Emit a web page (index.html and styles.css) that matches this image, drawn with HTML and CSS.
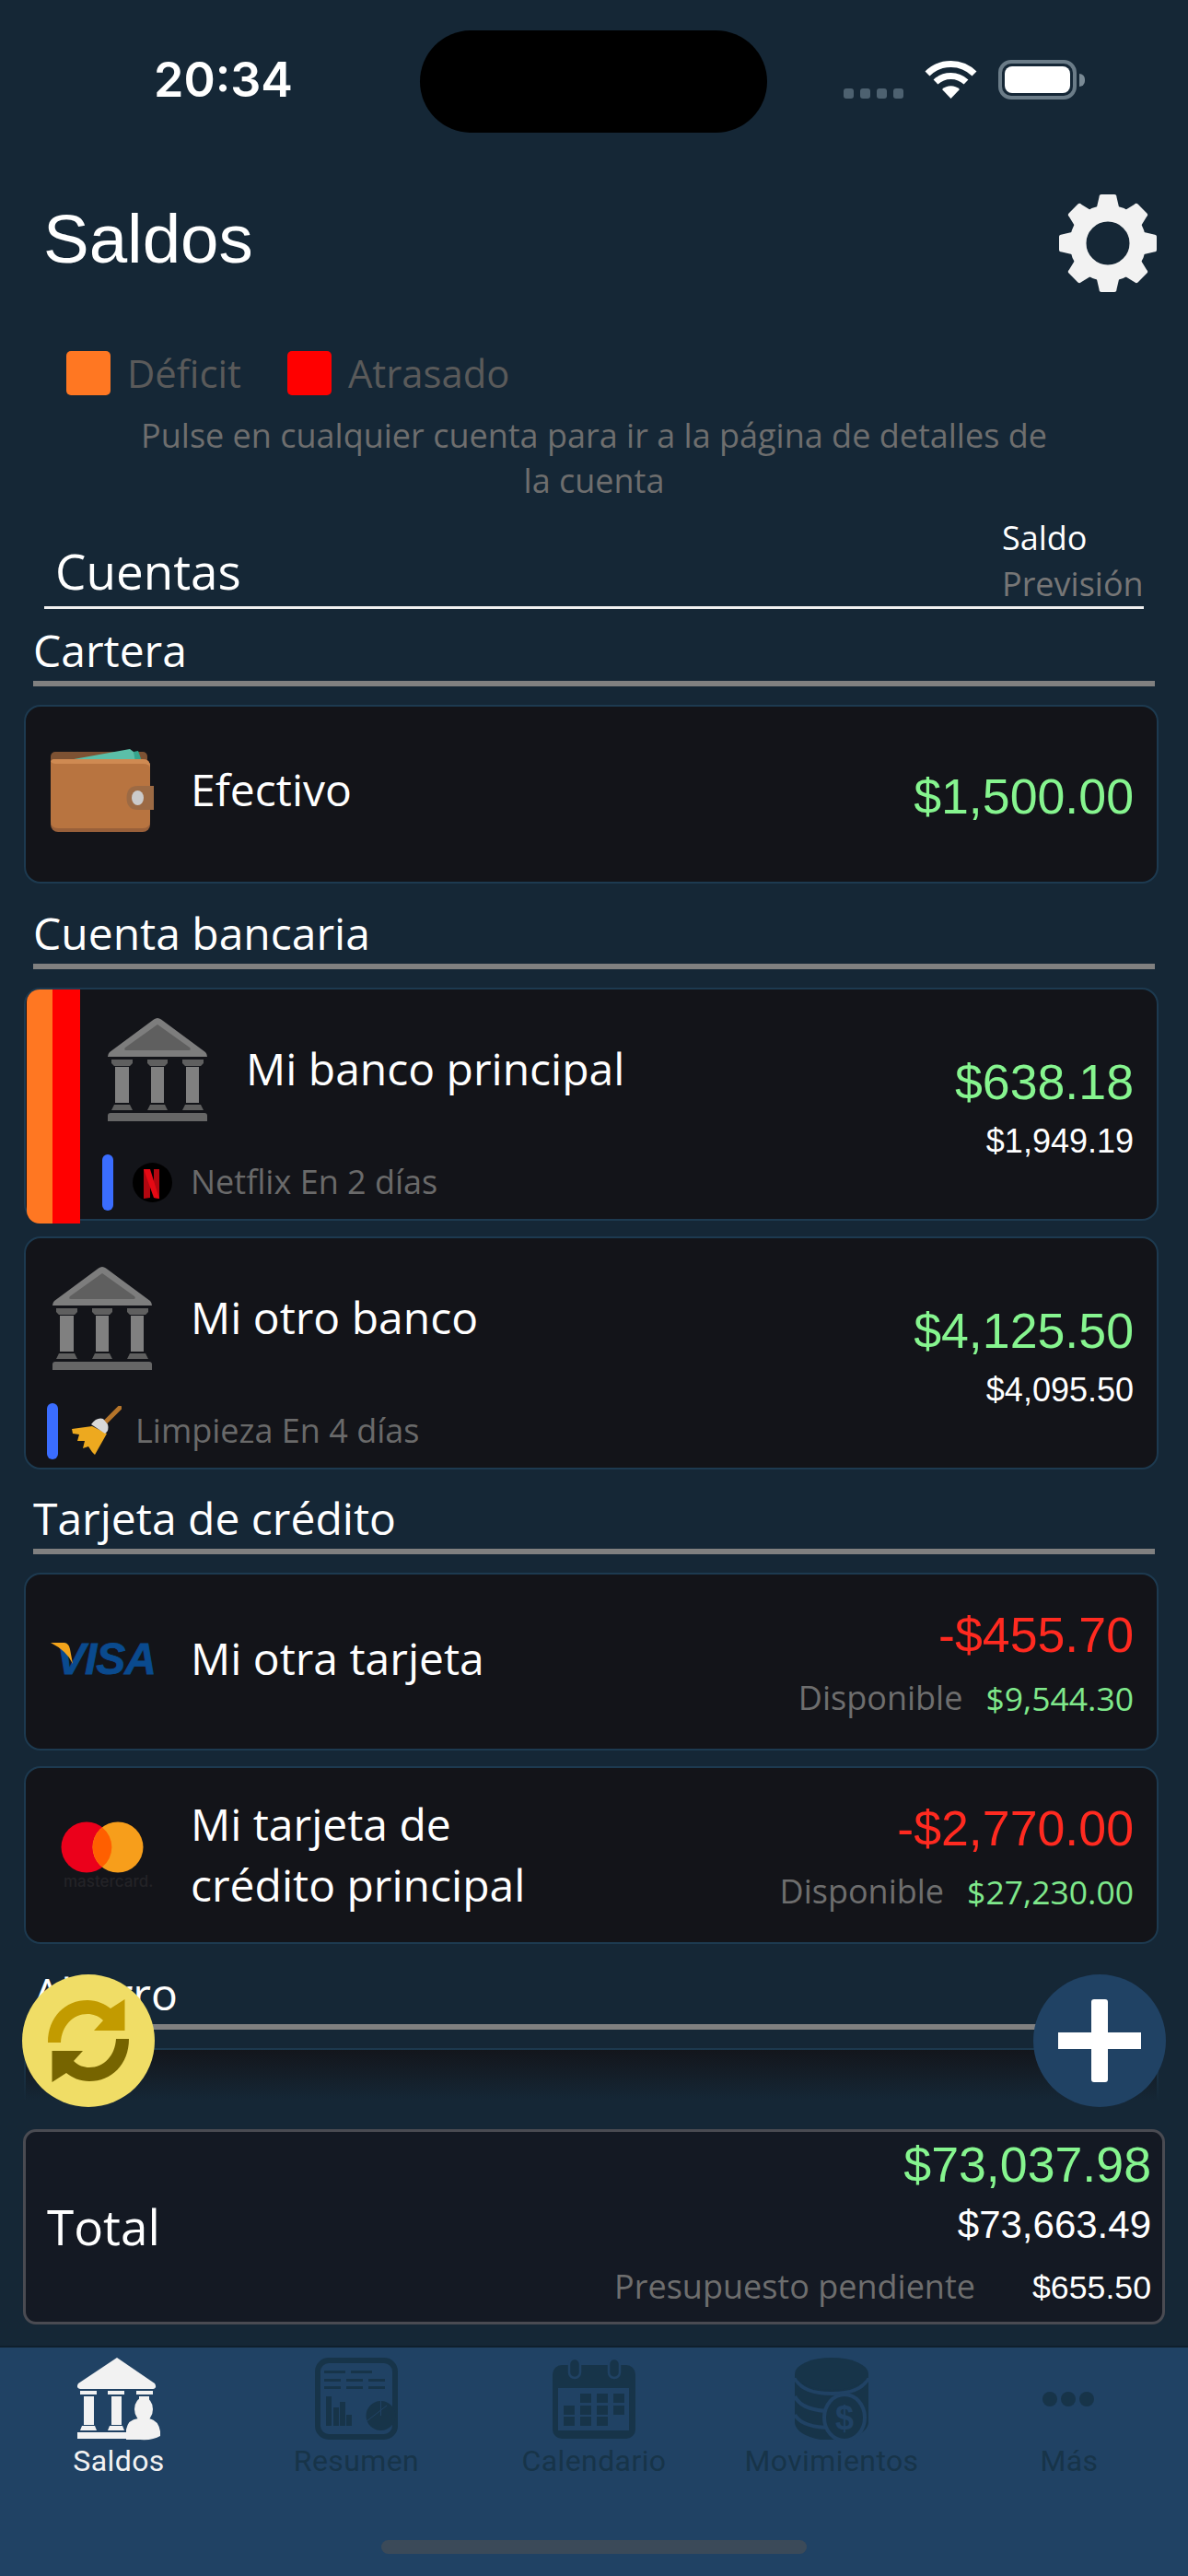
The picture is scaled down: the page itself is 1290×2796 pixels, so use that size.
FILE: index.html
```html
<!DOCTYPE html>
<html lang="es">
<head>
<meta charset="utf-8">
<title>Saldos</title>
<link rel="stylesheet" href="styles.css">
</head>
<body>
<div class="screen">
  <div class="status">
    <div class="time">20:34</div>
    <div class="island"></div>
    <div class="sys">
      <div class="signal"><i></i><i></i><i></i><i></i></div>
      <svg class="wifi" width="57" height="42" viewBox="0 0 57 42"><path d="M3 15A36 36 0 0 1 54 15" fill="none" stroke="#fff" stroke-width="7"/><path d="M12 24A24 24 0 0 1 45 24" fill="none" stroke="#fff" stroke-width="7"/><path d="M28.5 42L19 32A14 14 0 0 1 38 32Z" fill="#fff"/></svg>
      <div class="battery"><div class="battery-fill"></div></div>
      <div class="battery-nub"></div>
    </div>
  </div>

  <header class="head">
    <h1 class="title">Saldos</h1>
    <svg class="gear" width="106" height="106" viewBox="0 0 106 106">
      <defs><path id="tooth" d="M43.5 3Q43.5 0 46 0H60Q62.5 0 62.5 3L66 18H40Z" fill="#f2f2f2"/></defs>
      <use href="#tooth"/><use href="#tooth" transform="rotate(45 53 53)"/><use href="#tooth" transform="rotate(90 53 53)"/><use href="#tooth" transform="rotate(135 53 53)"/><use href="#tooth" transform="rotate(180 53 53)"/><use href="#tooth" transform="rotate(225 53 53)"/><use href="#tooth" transform="rotate(270 53 53)"/><use href="#tooth" transform="rotate(315 53 53)"/>
      <circle cx="53" cy="53" r="32.5" fill="none" stroke="#f2f2f2" stroke-width="18"/>
    </svg>
  </header>

  <div class="legend">
    <span class="swatch swatch-orange"></span><span class="legend-text">Déficit</span>
    <span class="swatch swatch-red"></span><span class="legend-text">Atrasado</span>
  </div>
  <p class="hint">Pulse en cualquier cuenta para ir a la página de detalles de la cuenta</p>

  <div class="cols">
    <div class="cols-title">Cuentas</div>
    <div class="cols-right"><div class="cols-saldo">Saldo</div><div class="cols-prev">Previsión</div></div>
  </div>

  <main class="list">
    <section class="group group-first">
      <div class="group-head">Cartera</div>
      <article class="card">
        <div class="body body-center">
          <svg class="icon wallet" width="112" height="90" viewBox="0 0 112 90">
            <rect x="0" y="3" width="105" height="24" rx="5" fill="#7d5233"/>
            <path d="M14 13L86 0 L90 3 L100 25H14Z" fill="#5bbfa8"/><path d="M90 3L95 2L100 16V25H94Z" fill="#36a58d"/>
            <rect x="0" y="11" width="108" height="79" rx="8" fill="#99603a"/>
            <path d="M0 15Q0 11 4 11H100Q108 11 108 19V78Q108 86 100 86H8Q0 86 0 78Z" fill="#b87440"/>
            <path d="M0 15Q0 11 4 11H100Q108 11 108 19V21Q108 16 100 16H6Q0 16 0 12Z" fill="#cf8a52"/>
            <path d="M112 40V66H95Q82.500 66 82.500 53Q82.500 40 95 40Z" fill="#9c6a44"/>
            <ellipse cx="94.500" cy="53" rx="6.500" ry="8" fill="#cbcbcb"/>
          </svg>
          <div class="name name-cash">Efectivo</div>
          <div class="amounts"><div class="big green big-low">$1,500.00</div></div>
        </div>
      </article>
    </section>

    <section class="group">
      <div class="group-head">Cuenta bancaria</div>
      <article class="card card-tall">
        <div class="stripes"><span class="stripe-orange"></span><span class="stripe-red"></span></div>
        <div class="body">
          <div class="left">
            <div class="row">
              <svg class="icon" width="112" height="112" viewBox="-2 0 112 112"><use href="#bank"/></svg>
              <div class="name name-tiny">Mi banco principal</div>
            </div>
            <div class="bill">
              <span class="pill"></span>
              <span class="bill-icon">
                <svg width="43" height="43" viewBox="0 0 43 43"><circle cx="21.500" cy="21.500" r="21.500" fill="#000"/><path d="M12 7H19V38L12 39Z" fill="#b20710"/><path d="M23 7H29V39L23 38Z" fill="#b20710"/><path d="M12 7H19L29 39L23 38Z" fill="#e50914"/></svg>
              </span>
              <span class="bill-text">Netflix En 2 días</span>
            </div>
          </div>
          <div class="amounts amounts-top"><div class="big green">$638.18</div><div class="small-sans">$1,949.19</div></div>
        </div>
      </article>
      <article class="card card-tall card-next">
        <div class="body">
          <div class="left">
            <div class="row">
              <svg class="icon" width="112" height="112" viewBox="-2 0 112 112">
                <g id="bank">
                  <path d="M54 0Q56 0 58 1.500L106 37Q108 39 108 42H0Q0 39 2 37L50 1.500Q52 0 54 0Z" fill="#7d7d7d"/>
                  <path d="M54 7L89 32Q91 35 88 35H20Q17 35 19 32Z" fill="#5f5f5f"/>
                  <path d="M4 45H27V49L24 52H7L4 49ZM43 45H65V49L62 52H46L43 49ZM81 45H104V49L101 52H84L81 49Z" fill="#5f5f5f"/>
                  <path d="M8 53H23V92H8ZM47 53H61V92H47ZM85 53H99V92H85Z" fill="#808080"/>
                  <path d="M7 94H24L27 100H4ZM46 94H62L65 100H43ZM84 94H101L104 100H81Z" fill="#5f5f5f"/>
                  <path d="M3 103H105Q108 103 108 106V112H0V106Q0 103 3 103Z" fill="#666"/>
                </g>
              </svg>
              <div class="name name-tiny">Mi otro banco</div>
            </div>
            <div class="bill">
              <span class="pill"></span>
              <span class="bill-icon">
                <svg width="54" height="54" viewBox="0 0 54 54">
                  <path d="M36 18L52 2" stroke="#b5752a" stroke-width="5" stroke-linecap="round"/>
                  <path d="M0 25L22 22L38 30L25 53L22 50L18 44L12 46L14 38L6 38L8 31L1 30Z" fill="#eda91f"/>
                  <path d="M21 20Q27 12 34 14L39 20Q41 27 36 30Z" fill="#d9d9d9"/>
                </svg>
              </span>
              <span class="bill-text">Limpieza En 4 días</span>
            </div>
          </div>
          <div class="amounts amounts-top"><div class="big green">$4,125.50</div><div class="small-sans">$4,095.50</div></div>
        </div>
      </article>
    </section>

    <section class="group">
      <div class="group-head">Tarjeta de crédito</div>
      <article class="card card-low">
        <div class="body body-center">
          <svg class="icon visa" width="112" height="44" viewBox="0 0 112 44">
            <text class="visa-text" x="6" y="39">VISA</text>
            <path d="M0 5H15Q20 6 21 12L24 28Q18 14 0 5Z" fill="#f3a41b"/>
          </svg>
          <div class="name name-up">Mi otra tarjeta</div>
          <div class="amounts amounts-credit">
            <div class="big red">-$455.70</div>
            <div class="avail"><span class="avail-label">Disponible</span><span class="avail-value">$9,544.30</span></div>
          </div>
        </div>
      </article>
      <article class="card card-low card-next">
        <div class="body body-center">
          <svg class="icon" width="112" height="74" viewBox="0 0 112 74">
            <circle cx="39" cy="28" r="27.500" fill="#eb001b"/>
            <circle cx="73" cy="28" r="27.500" fill="#f79e1b"/>
            <path d="M56 6.500A27.500 27.500 0 0 1 56 49.500A27.500 27.500 0 0 1 56 6.500Z" fill="#ff5f00"/>
            <text class="mc-text" x="14" y="71">mastercard.</text>
          </svg>
          <div class="name name-two">Mi tarjeta de<br>crédito principal</div>
          <div class="amounts amounts-credit">
            <div class="big red">-$2,770.00</div>
            <div class="avail"><span class="avail-label">Disponible</span><span class="avail-value">$27,230.00</span></div>
          </div>
        </div>
      </article>
    </section>

    <section class="group">
      <div class="group-head">Ahorro</div>
      <article class="card card-low"></article>
    </section>
    <div class="fade"></div>
  </main>

  <section class="total">
    <div class="total-label">Total</div>
    <div class="total-right">
      <div class="big green">$73,037.98</div>
      <div class="mid-sans">$73,663.49</div>
      <div class="pending"><span class="pending-label">Presupuesto pendiente</span><span class="pending-value">$655.50</span></div>
    </div>
  </section>

  <nav class="tabbar">
    <div class="tabs">
      <div class="tab tab-active">
        <svg width="90" height="90" viewBox="0 0 90 90" fill="#f2f2f2">
          <path d="M43 0L84 28Q87 33 82 34H3Q-2 33 1 28Z"/>
          <path d="M3 36H21V40H3ZM33 36H51V40H33ZM64 36H82V40H64Z"/>
          <path d="M7 42H18V73H7ZM37 42H48V73H37ZM67 42H78V60H67Z"/>
          <path d="M5 74H19L21 79H3ZM35 74H49L51 79H33Z"/>
          <path d="M0 81H60V88H0Z"/>
          <ellipse cx="72" cy="56" rx="10" ry="13"/>
          <path d="M53 89V78Q55 67 66 66H78Q88 68 90 80V85Q82 90 68 89Z"/>
        </svg>
        <span class="tab-label">Saldos</span>
      </div>
      <div class="tab">
        <svg width="90" height="90" viewBox="0 0 90 90" fill="#173449">
          <rect x="3" y="3" width="84" height="83" rx="12" fill="none" stroke="#173449" stroke-width="6"/>
          <path d="M10 14H33V17H10ZM39 14H62V17H39ZM10 23H28V26H10ZM34 23H52V26H34ZM58 23H76V26H58ZM10 31H28V34H10ZM34 31H52V34H34ZM58 31H76V34H58Z"/>
          <path d="M12 42H18V74H12ZM20 54H26V74H20ZM27 48H33V74H27ZM34 62H40V74H34Z"/>
          <circle cx="71.500" cy="63" r="16"/>
          <path d="M51 73L78 52M71.500 47V63" stroke="#204264" stroke-width="1"/>
        </svg>
        <span class="tab-label">Resumen</span>
      </div>
      <div class="tab">
        <svg width="90" height="90" viewBox="0 0 90 90" fill="#173449">
          <rect x="0" y="8" width="90" height="80" rx="10"/>
          <rect x="18" y="1" width="12" height="21" rx="6" stroke="#204264" stroke-width="2.500"/>
          <rect x="61" y="1" width="12" height="21" rx="6" stroke="#204264" stroke-width="2.500"/>
          <rect x="6" y="33" width="77" height="46" fill="#204264"/>
          <path d="M30 39h12v10h-12zM48 39h12v10h-12zM66 39h12v10h-12zM12 52h12v10h-12zM30 52h12v10h-12zM48 52h12v10h-12zM66 52h12v10h-12zM12 64h12v10h-12zM30 64h12v10h-12zM48 64h12v10h-12z"/>
        </svg>
        <span class="tab-label">Calendario</span>
      </div>
      <div class="tab">
        <svg width="80" height="90" viewBox="0 0 80 90" fill="#173449">
          <path d="M0 18V71Q2 84 28 89H52Q78 84 80 71V18Z"/>
          <path d="M0 22Q8 39 40 39Q72 39 80 22M0 42Q8 58 40 58M0 62Q8 76 40 76" fill="none" stroke="#204264" stroke-width="4"/>
          <ellipse cx="40" cy="17.500" rx="40" ry="17.500"/>
          <ellipse cx="54" cy="65" rx="22" ry="25" stroke="#204264" stroke-width="4"/>
          <text class="coin-text" x="54" y="78">$</text>
        </svg>
        <span class="tab-label">Movimientos</span>
      </div>
      <div class="tab">
        <svg width="90" height="90" viewBox="0 0 90 90" fill="#173449">
          <ellipse cx="24" cy="45" rx="8" ry="8"/><ellipse cx="44" cy="45" rx="8" ry="8"/><ellipse cx="64" cy="45" rx="8" ry="8"/>
        </svg>
        <span class="tab-label">Más</span>
      </div>
    </div>
    <div class="home"></div>
  </nav>

  <button class="fab fab-sync" aria-label="Sincronizar">
    <svg width="144" height="144" viewBox="0 0 144 144">
      <path d="M28 74C28 46 47 28 71 28C81 28 90 32 96 37L111.500 27V61H78L88 50C83 45 77 43 71 43C55 43 43 56 42 74Z" fill="#c29b00"/>
      <path d="M28 74C28 46 47 28 71 28C81 28 90 32 96 37L111.500 27V61H78L88 50C83 45 77 43 71 43C55 43 43 56 42 74Z" fill="#766400" transform="rotate(180 72 72)"/>
    </svg>
  </button>
  <button class="fab fab-add" aria-label="Añadir">
    <svg width="90" height="90" viewBox="0 0 90 90"><path d="M36 3Q36 0 39 0H51Q54 0 54 3V36H90V54H54V87Q54 90 51 90H39Q36 90 36 87V54H0V36H36Z" fill="#fff"/></svg>
  </button>
</div>
</body>
</html>
```
FILE: styles.css
```css
* { box-sizing: border-box; }
html, body { margin: 0; padding: 0; }
body { background: #152736; font-family: "Open Sans", sans-serif; color: #fff; }
.screen { position: relative; width: 1290px; height: 2796px; display: flex; flex-direction: column; overflow: hidden; background: #152736; }

/* status bar */
.status { display: grid; grid-template-columns: 456px 377px 1fr; padding-top: 33px; flex: none; }
.time { padding: 31px 0 0 167px; font: 600 52px/46px Inter, sans-serif; }
.island { height: 111px; border-radius: 56px; background: #000; }
.sys { display: flex; align-items: flex-start; padding: 32px 0 0 83px; }
.signal { display: flex; gap: 7px; margin-top: 31px; }
.signal i { width: 11px; height: 11px; border-radius: 3px; background: #4d6170; }
.wifi { margin-left: 23px; }
.battery { margin-left: 23px; width: 85px; height: 43px; border: 4px solid #6b7c88; border-radius: 14px; padding: 3px; }
.battery-fill { height: 100%; background: #fff; border-radius: 8px; }
.battery-nub { width: 6px; height: 14px; margin: 15px 0 0 3px; background: #7a8a95; border-radius: 0 7px 7px 0; }

/* header */
.head { display: flex; justify-content: space-between; align-items: center; margin-top: 67px; padding: 0 34px 0 47px; flex: none; }
.title { margin: -8px 0 0; font: 400 74.5px/84px "Liberation Sans", sans-serif; }
.legend { display: flex; align-items: center; margin: 64px 0 0 72px; flex: none; height: 48px; }
.swatch { width: 48px; height: 48px; border-radius: 5px; margin-right: 18px; }
.swatch-orange { background: #ff7722; }
.swatch-red { background: #ff0000; margin-left: 50px; margin-right: 18px; }
.legend-text { font-size: 41.8px; line-height: 48px; color: #5a5a5a; }
.hint { margin: 19px 0 0; padding: 0 150px; text-align: center; font-size: 36px; line-height: 49px; color: #6e6e6e; flex: none; }

/* columns heading */
.cols { display: flex; justify-content: space-between; align-items: flex-end; margin: 13px 48px 0; padding: 0 2px 0 12px; border-bottom: 3px solid #f0f0f0; flex: none; }
.cols-title { font-size: 53px; line-height: 64px; margin-bottom: 6px; }
.cols-right { font-size: 36px; line-height: 49.5px; width: 152px; }
.cols-prev { color: #767676; }

/* list */
.list { position: relative; flex: 1; min-height: 0; overflow: hidden; padding: 0 32px 0 26px; }
.group { margin-top: 21.5px; }
.group-first { margin-top: 13px; }
.group-head { margin: 0 4px 20px 10px; padding: 2px 0 3px; font-size: 48px; line-height: 60px; border-bottom: 6px solid #808080; height: 71px; }
.card { display: flex; height: 194px; background: #131419; border: 2px solid #1d3a50; border-radius: 18px; }
.card-low { height: 193px; }
.card-tall { height: 253px; }
.card-next { margin-top: 17px; }
.stripes { display: flex; flex: none; width: 58px; margin: 0 1px -5px 1px; border-radius: 14px 0 0 14px; overflow: hidden; }
.stripe-orange { width: 28px; background: #ff7722; }
.stripe-red { width: 30px; background: #ff0000; }
.body { flex: 1; display: flex; justify-content: space-between; padding: 0 25px 0 27px; min-width: 0; }
.body-center { align-items: center; }
.left { padding-top: 31px; }
.row { display: flex; align-items: center; height: 112px; }
.icon { flex: none; display: block; }
.wallet { margin-top: -8px; }
.name { margin-left: 40px; font-size: 48px; line-height: 60px; margin-right: auto; }
.name-cash { padding-bottom: 11px; }
.name-up { padding-bottom: 8px; }
.name-tiny { padding-bottom: 2px; }
.name-two { line-height: 65.5px; padding-bottom: 2px; }
.amounts { text-align: right; flex: none; }
.amounts-credit { padding-top: 2px; }
.amounts-top { align-self: flex-start; margin-top: 69px; }
.big { font: 400 53.7px/62px "Liberation Sans", sans-serif; }
.big-low { margin-top: 3px; }
.green { color: #86f58f; }
.red { color: #ff2a20; }
.small-sans { margin-top: 11px; font: 400 36px/46px "Liberation Sans", sans-serif; color: #fff; }
.avail { display: flex; justify-content: flex-end; gap: 25px; margin-top: 15px; font-size: 36px; line-height: 46px; }
.avail-label { color: #6e6e6e; }
.avail-value { color: #7fe88b; font-size: 35.5px; }
.bill { display: flex; align-items: center; margin: 36px 0 0 -4px; height: 61px; }
.pill { width: 12px; height: 61px; border-radius: 6px; background: #3a6dff; }
.bill-icon { width: 54px; margin-left: 15px; display: flex; justify-content: center; align-items: center; }
.bill-icon svg { display: block; }
.bill-text { margin-left: 15px; font-size: 36px; line-height: 46px; color: #6a6a6a; }
.visa-text { font: italic 700 48px "Liberation Sans", sans-serif; letter-spacing: -1px; fill: #0a4a8e; stroke: #0a4a8e; stroke-width: .8px; }
.visa { margin-top: -8px; overflow: visible; }
.mc-text { font: 500 17px Inter, sans-serif; fill: #232327; }
.fade { position: absolute; left: 0; right: 0; bottom: 0; height: 58px; background: linear-gradient(to bottom, rgba(21,39,54,.04), #152736); }

/* total */
.total { flex: none; display: flex; justify-content: space-between; align-items: center; height: 212px; margin: 31px 25px 23px; padding: 0 12px 0 23px; background: #141923; border: 3px solid #4a4b52; border-radius: 14px; }
.total-label { font-size: 53px; line-height: 64px; }
.total-right { align-self: flex-start; padding-top: 4px; text-align: right; }
.mid-sans { margin-top: 10px; font: 400 42px/50px "Liberation Sans", sans-serif; }
.pending { display: flex; justify-content: flex-end; align-items: baseline; gap: 62px; margin-top: 19px; }
.pending-label { font-size: 36px; line-height: 46px; color: #6e6e6e; }
.pending-value { font: 400 35.7px/46px "Liberation Sans", sans-serif; }

/* tab bar */
.tabbar { flex: none; height: 250px; background: #204264; border-top: 2px solid #0f1f2c; }
.tabs { display: grid; grid-template-columns: repeat(5, 258px); padding-top: 11px; }
.tab { display: flex; flex-direction: column; align-items: center; color: #173449; }
.tab svg { display: block; }
.tab-active { color: #f2f2f2; }
.tab-label { margin-top: 3px; font: 400 32px/38px Roboto, sans-serif; letter-spacing: .4px; }
.coin-text { font: 700 36px "Liberation Sans", sans-serif; fill: #204264; text-anchor: middle; }
.home { width: 462px; height: 15px; margin: 67px auto 0; border-radius: 8px; background: #3b4a59; }

/* floating buttons */
.fab { position: absolute; top: 2143px; width: 144px; height: 144px; padding: 0; border: 0; border-radius: 50%; display: flex; align-items: center; justify-content: center; }
.fab-sync { left: 24px; background: #f0dd66; }
.fab-add { left: 1122px; background: #204264; }
```
